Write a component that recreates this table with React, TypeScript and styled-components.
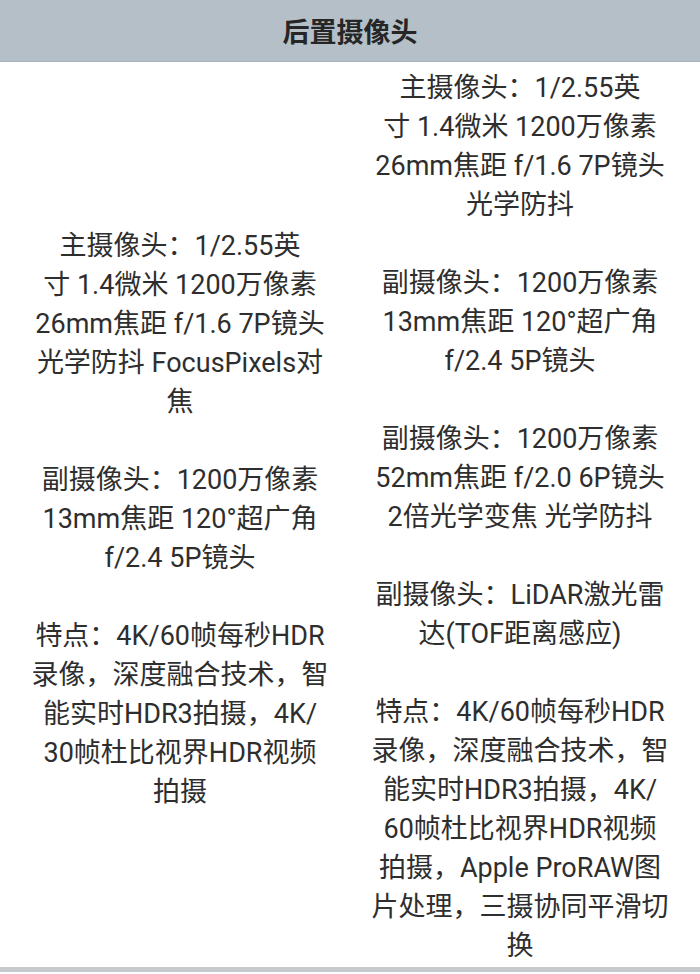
import styled, { createGlobalStyle } from "styled-components";

const GlobalStyle = createGlobalStyle`
  html, body {
    margin: 0;
    padding: 0;
    background: #fff;
  }
  body {
    font-family: Roboto, "Noto Sans CJK SC", sans-serif;
    color: #2e2e2e;
  }
`;

// each paragraph is kept as the lines it shows on screen
const leftSpecs = [
  ["主摄像头：1/2.55英", "寸 1.4微米 1200万像素", "26mm焦距 f/1.6 7P镜头", "光学防抖 FocusPixels对", "焦"],
  ["副摄像头：1200万像素", "13mm焦距 120°超广角", "f/2.4 5P镜头"],
  ["特点：4K/60帧每秒HDR", "录像，深度融合技术，智", "能实时HDR3拍摄，4K/", "30帧杜比视界HDR视频", "拍摄"],
];

const rightSpecs = [
  ["主摄像头：1/2.55英", "寸 1.4微米 1200万像素", "26mm焦距 f/1.6 7P镜头", "光学防抖"],
  ["副摄像头：1200万像素", "13mm焦距 120°超广角", "f/2.4 5P镜头"],
  ["副摄像头：1200万像素", "52mm焦距 f/2.0 6P镜头", "2倍光学变焦 光学防抖"],
  ["副摄像头：LiDAR激光雷", "达(TOF距离感应)"],
  [
    "特点：4K/60帧每秒HDR",
    "录像，深度融合技术，智",
    "能实时HDR3拍摄，4K/",
    "60帧杜比视界HDR视频",
    "拍摄，Apple ProRAW图",
    "片处理，三摄协同平滑切",
    "换",
  ],
];

const SpecColumn = ({ specs, top }: { specs: string[][]; top?: boolean }) => (
  <Style.Cell top={top}>
    {specs.map((lines, i) => (
      <Style.Para key={i}>
        {lines.map((line, j) => (
          <Style.Line key={j}>{line}</Style.Line>
        ))}
      </Style.Para>
    ))}
  </Style.Cell>
);

const SpecTable = () => {
  return (
    <Style.Page>
      <Style.Header>后置摄像头</Style.Header>
      <Style.Row>
        <SpecColumn specs={leftSpecs} />
        <SpecColumn specs={rightSpecs} top />
      </Style.Row>
    </Style.Page>
  );
};

export default function App() {
  return (
    <>
      <GlobalStyle />
      <SpecTable />
    </>
  );
}

const Style = {
  Page: styled.div`
    width: 700px;
    height: 974px;
    overflow: hidden;
    background: #fff;
  `,
  Header: styled.div`
    height: 62px;
    display: flex;
    align-items: center;
    justify-content: center;
    background: #b5bfc7;
    font-size: 27px;
    font-weight: 700;
    color: #262626;
    border-bottom: 1px solid #a9b3bb;
    box-sizing: border-box;
  `,
  Row: styled.div`
    display: grid;
    grid-template-columns: 340px 340px;
    padding: 0 10px;
    height: 905px;
    border-bottom: 5px solid #c6cacd;
  `,
  Cell: styled.div<{ top?: boolean }>`
    padding: ${(props) => (props.top ? "7px 10px 0" : "9px 10px 0")};
    text-align: center;
    font-size: 27px;
    line-height: 39px;
    align-self: ${(props) => (props.top ? "start" : "center")};
  `,
  Para: styled.p`
    margin: 0;
    & + & {
      margin-top: 39px;
    }
  `,
  Line: styled.span`
    display: block;
    white-space: nowrap;
  `,
};
